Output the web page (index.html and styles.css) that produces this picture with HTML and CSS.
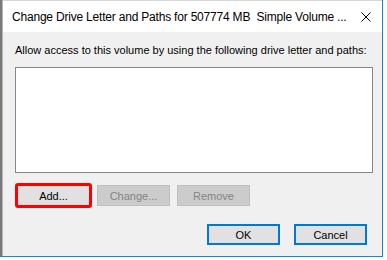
FILE: index.html
```html
<!DOCTYPE html>
<html>
<head>
    <link rel="stylesheet" href="styles.css">
</head>
<body>
    <div class="dialog">
        <div class="title-bar">
            <span class="title">Change Drive Letter and Paths for 507774 MB&nbsp; Simple Volume ...</span>
            <svg class="close-icon" width="10" height="10" viewBox="0 0 10 10">
                <path d="M0.5 0.5 L9.5 9.5 M9.5 0.5 L0.5 9.5" stroke="#000" stroke-width="1" fill="none"/>
            </svg>
        </div>

        <div class="content">
            <p class="label">Allow access to this volume by using the following drive letter and paths:</p>

            <div class="path-list">
                <!-- drive letters and paths go here -->
            </div>

            <div class="button-row">
                <button class="btn highlight">Add...</button>
                <button class="btn" disabled>Change...</button>
                <button class="btn" disabled>Remove</button>
            </div>

            <div class="footer-row">
                <button class="btn default">OK</button>
                <button class="btn default">Cancel</button>
            </div>
        </div>
    </div>
</body>
</html>
```

FILE: styles.css
```css
body {
    margin: 0;
    background: #ffffff;
    font-family: "Liberation Sans", Arial, sans-serif;
}

.dialog {
    width: 380px;
    height: 256px;
    border-left: 2px solid #7a7a7a;
    border-right: 1px solid #1883d7;
    border-bottom: 1px solid #1883d7;
    display: flex;
    flex-direction: column;
    box-sizing: content-box;
    position: relative;
}

.dialog::before {
    content: "";
    position: absolute;
    left: 0;
    top: 0;
    bottom: 0;
    width: 1px;
    background: #b5b5b5;
}

.title-bar {
    height: 31px;
    border-top: 1px solid #d8d8d8;
    background: #ffffff;
    display: flex;
    align-items: center;
    padding-left: 10px;
    padding-right: 11px;
}

.title {
    flex: 1;
    font-family: "Liberation Sans", Arial, sans-serif;
    font-size: 12px;
    letter-spacing: -0.2px;
    color: #000;
    white-space: nowrap;
    overflow: hidden;
    padding-top: 1px;
}

.close-icon {
    display: block;
    flex-shrink: 0;
}

.content {
    flex: 1;
    background: #f0f0f0;
    padding: 12px 9px 0 13px;
    display: flex;
    flex-direction: column;
}

.label {
    margin: 0;
    font-size: 11px;
    line-height: 13px;
    color: #000;
}

.path-list {
    margin-top: 10px;
    height: 104px;
    border: 1px solid #828790;
    background: #ffffff;
}

.button-row {
    display: flex;
    gap: 7px;
    margin-top: 12px;
    padding-left: 2px;
}

.footer-row {
    display: flex;
    justify-content: flex-end;
    gap: 14px;
    margin-top: 18px;
    padding-right: 6px;
}

.btn {
    width: 73px;
    height: 21px;
    padding: 0;
    background: #e1e1e1;
    border: 1px solid #adadad;
    font-family: "Liberation Sans", Arial, sans-serif;
    font-size: 11px;
    color: #000;
}

.btn:disabled {
    background: #cccccc;
    border-color: #bfbfbf;
    color: #838383;
}

.highlight {
    outline: 3px solid #ff0000;
    outline-offset: -1px;
    border-radius: 1px;
}

.default {
    border: 2px solid #0078d7;
}
```
